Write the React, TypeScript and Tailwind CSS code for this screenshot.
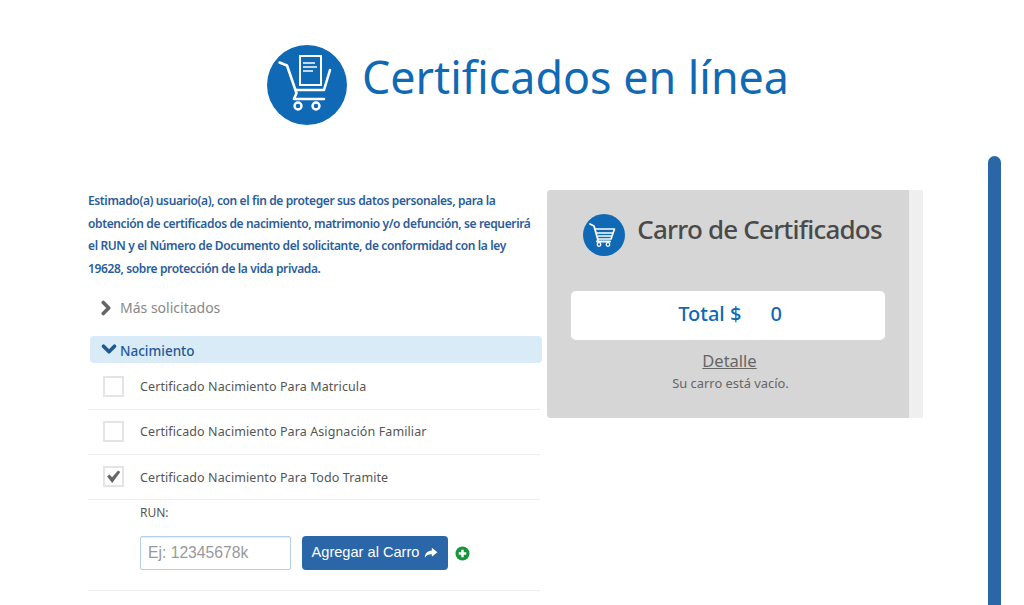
import { ChevronDown, ChevronRight } from 'lucide-react';

const FONT = "font-['Noto_Sans','Open_Sans',sans-serif]";

function CartIcon() {
  return (
    <svg viewBox="0 0 80 80" className="h-full w-full" fill="none">
      <circle cx="40" cy="40" r="40" fill="#0f69b4" />
      <rect x="33" y="11" width="21" height="29" stroke="#fff" strokeWidth="2" />
      <path d="M36 18h12M36 22h14M36 26h10" stroke="#fff" strokeWidth="1.5" />
      <path d="M12.5 17.5l7.5 3 9.5 27.5-2.5 6h30" stroke="#fff" strokeWidth="2.6" strokeLinecap="round" strokeLinejoin="round" />
      <path d="M29 45h28l6-20" stroke="#fff" strokeWidth="2.6" strokeLinecap="round" strokeLinejoin="round" />
      <circle cx="31" cy="61" r="3.5" stroke="#fff" strokeWidth="2.4" />
      <circle cx="49" cy="61" r="3.5" stroke="#fff" strokeWidth="2.4" />
    </svg>
  );
}

function SmallCart() {
  return (
    <svg viewBox="0 0 42 42" className="h-full w-full" fill="none">
      <circle cx="21" cy="21" r="21" fill="#0f69b4" />
      <path d="M7 10l4 2 4 14-1 1.5h13" stroke="#fff" strokeWidth="1.8" strokeLinecap="round" strokeLinejoin="round" />
      <path d="M12 15h19.5L28 25H15" stroke="#fff" strokeWidth="1.7" strokeLinejoin="round" />
      <path d="M14 19h16M15 22h14" stroke="#fff" strokeWidth="1.3" />
      <circle cx="16" cy="30.5" r="1.8" stroke="#fff" strokeWidth="1.3" />
      <circle cx="25" cy="30.5" r="1.8" stroke="#fff" strokeWidth="1.3" />
    </svg>
  );
}

function CheckRow({ label, checked }: { label: string; checked?: boolean }) {
  return (
    <div className="flex h-[45px] items-center border-b border-[#eeeeee] pl-[15px]">
      <div className="flex h-[21px] w-[21px] items-center justify-center border-2 border-[#e4e4e4] bg-white">
        {checked && (
          <svg viewBox="0 0 20 20" className="h-[19px] w-[19px]">
            <path d="M2.5 10l2.8-2.4 3 3.4L15.5 2.8l2.5 1.8-9.5 13z" fill="#666666" />
          </svg>
        )}
      </div>
      <span className={`ml-[16px] text-[12.5px] tracking-[0.1px] text-[#555555] ${checked ? 'mt-[3px]' : 'mt-[1px]'}`}>
        {label}
      </span>
    </div>
  );
}

export default function App() {
  return (
    <div className={`relative h-[605px] w-[1024px] overflow-hidden bg-white ${FONT}`}>
      {/* Header */}
      <header className="flex items-start justify-center gap-[15px] pt-[45px] pl-[32px]">
        <div className="h-[80px] w-[80px]">
          <CartIcon />
        </div>
        <h1 className="mt-[1px] text-[44.8px] leading-[62px] text-[#0f69b4]">Certificados en línea</h1>
      </header>

      <main className="mt-[65px] flex items-start pl-[88px]">
        {/* Left column */}
        <section className="w-[452px]">
          <p className="text-[12px] leading-[22.7px] font-semibold tracking-[-0.37px] text-[#2b5d9b]">
            Estimado(a) usuario(a), con el fin de proteger sus datos personales, para la obtención de certificados de
            nacimiento, matrimonio y/o defunción, se requerirá el RUN y el Número de Documento del solicitante, de
            conformidad con la ley 19628, sobre protección de la vida privada.
          </p>
          <div className="mt-[16px] flex h-[22px] items-center pl-[7px] text-[14px] text-[#888888]">
            <ChevronRight size={22} strokeWidth={4} className="text-[#666666]" />
            <span className="ml-[3px]">Más solicitados</span>
          </div>
          <div className="mt-[17px] ml-[2px] flex h-[27px] w-[452px] items-center rounded-[4px] bg-[#d9ebf7] pl-[8px] text-[13.5px] font-medium text-[#1f5a96]">
            <ChevronDown size={22} strokeWidth={4} />
            <span className="mt-[3px]">Nacimiento</span>
          </div>
          <div className="h-[2px]" />
          <CheckRow label="Certificado Nacimiento Para Matricula" />
          <CheckRow label="Certificado Nacimiento Para Asignación Familiar" />
          <CheckRow label="Certificado Nacimiento Para Todo Tramite" checked />
          <div className="h-[91px] border-b border-[#eeeeee] pt-[5px] pl-[52px]">
            <div className="text-[12px] leading-[16px] text-[#555555]">RUN:</div>
            <div className="mt-[15px] flex items-center font-['Liberation_Sans',sans-serif]">
              <div className="flex h-[34px] w-[151px] items-center rounded-[2px] border border-[#b5d0e4] pl-[7px] text-[15.7px] text-[#999999] shadow-[inset_0_1px_1px_rgba(0,0,0,0.075)]">
                Ej: 12345678k
              </div>
              <div className="ml-[11px] flex h-[34px] w-[146px] items-center justify-center gap-[5px] rounded-[4px] bg-[#2a66a8] text-[14.6px] text-white">
                Agregar al Carro
                <svg viewBox="0 0 16 14" className="h-[12px] w-[14px]">
                  <path d="M9 1l6.5 5.2L9 11.5V8.4C5.5 8.3 2.8 9.2 0.8 12.5 1 7.6 4 4.6 9 4.2z" fill="#fff" />
                </svg>
              </div>
              <svg viewBox="0 0 16 16" className="mt-[1px] ml-[7px] h-[15px] w-[15px]">
                <circle cx="8" cy="8" r="7.5" fill="#16953b" />
                <path d="M8 4v8M4 8h8" stroke="#fff" strokeWidth="2.6" />
              </svg>
            </div>
          </div>
        </section>

        {/* Cart panel */}
        <aside className="ml-[7px] flex h-[228px] w-[376px] rounded-l-[4px] bg-[#efefef]">
          <div className="flex w-[362px] flex-col items-center rounded-l-[4px] bg-[#d6d6d6]">
            <div className="mt-[24px] ml-[9px] flex items-start">
              <div className="h-[42px] w-[42px]">
                <SmallCart />
              </div>
              <h2 className="mt-[-3px] ml-[12px] text-[26px] leading-[36px] font-medium tracking-[-0.8px] text-[#4a4a4a]">
                Carro de Certificados
              </h2>
            </div>
            <div className="mt-[35px] flex h-[49px] w-[314px] items-center justify-center rounded-[5px] bg-white pb-[3px] pl-[4px] text-[20px] font-medium text-[#0f69b4]">
              <span>Total $</span>
              <span className="ml-[29px]">0</span>
            </div>
            <div className="mt-[10px] ml-[3px] text-[16.5px] leading-[22px] text-[#666666] underline">Detalle</div>
            <div className="mt-[2px] ml-[5px] text-[12.9px] leading-[18px] text-[#666666]">Su carro está vacío.</div>
          </div>
        </aside>
      </main>

      {/* Scroll marker on the right edge */}
      <div className="absolute top-[156px] left-[988px] h-[460px] w-[13px] rounded-t-[7px] bg-[#2a66a8]" />
    </div>
  );
}
